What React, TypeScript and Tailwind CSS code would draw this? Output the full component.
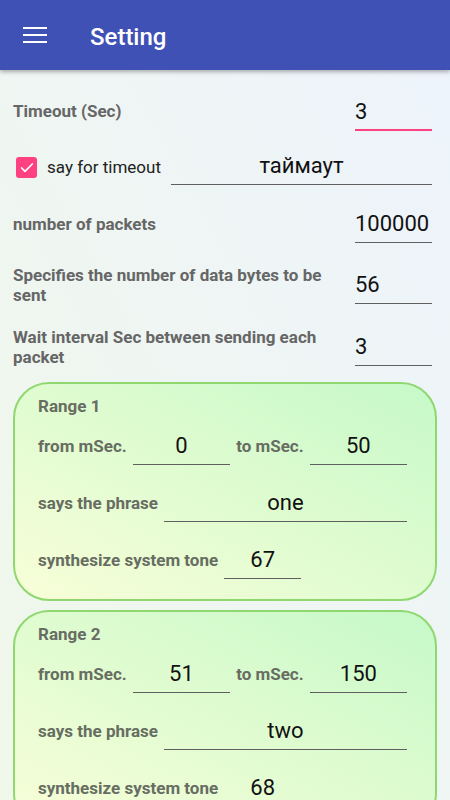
import { Check } from "lucide-react";

type FieldProps = { value: string; className?: string; active?: boolean };

function Field({ value, className = "", active = false }: FieldProps) {
  return (
    <div
      className={`flex h-[38px] shrink-0 items-center justify-center text-[22px] text-[#111] ${
        active ? "border-b-2 border-[#ff4081]" : "border-b border-[#5f5f5f]"
      } ${className}`}
    >
      {value}
    </div>
  );
}

function Row({ label, value, className = "" }: { label: string; value: string; className?: string }) {
  return (
    <div className={`mr-[5px] flex items-center gap-[10px] ${className}`}>
      <span className="flex-1 text-[17px] leading-5 font-bold text-[#666]">{label}</span>
      <Field value={value} className="w-[77px] !justify-start" />
    </div>
  );
}

function RangeCard({ n, from, to, phrase, tone, className = "" }: { n: number; from: string; to: string; phrase: string; tone: string; className?: string }) {
  const label = "text-[17px] leading-5 font-bold text-[#676d62] whitespace-nowrap";
  return (
    <div className={`rounded-[36px] border-2 border-[#8fd870] bg-linear-to-tr from-[#f8fed8] to-[#c6f9c9] pt-[12px] pr-[28px] pb-[20px] pl-[23px] ${className}`}>
      <div className={label}>Range {n}</div>
      <div className="mt-[11px] flex items-center gap-[6px]">
        <span className={label}>from mSec.</span>
        <Field value={from} className="flex-1" />
        <span className={label}>to mSec.</span>
        <Field value={to} className="flex-1" />
      </div>
      <div className="mt-[19px] flex items-center gap-[6px]">
        <span className={label}>says the phrase</span>
        <Field value={phrase} className="flex-1" />
      </div>
      <div className="mt-[19px] flex items-center gap-[6px]">
        <span className={label}>synthesize system tone</span>
        <Field value={tone} className="w-[77px]" />
      </div>
    </div>
  );
}

export default function App() {
  return (
    <div className="relative h-[800px] w-[450px] overflow-hidden bg-linear-to-tr from-[#f0f8ea] to-[#edf3fc] font-['Roboto',sans-serif]">
      <header className="relative z-10 flex h-[70px] items-center bg-[#3f51b5] shadow-[0_2px_4px_rgba(0,0,0,0.3)]">
        <svg width="24" height="18" viewBox="0 0 24 18" className="ml-[23px]">
          <rect x="0" y="1" width="24" height="2" fill="#fff" />
          <rect x="0" y="8" width="24" height="2" fill="#fff" />
          <rect x="0" y="15" width="24" height="2" fill="#fff" />
        </svg>
        <h1 className="mt-[3px] ml-[43px] text-[24px] font-medium text-white">Setting</h1>
      </header>

      <main className="px-[13px]">
        <div className="mt-[23px] mr-[5px] flex items-center gap-[10px]">
          <span className="flex-1 text-[17px] font-bold text-[#666]">Timeout (Sec)</span>
          <Field value="3" active className="w-[77px] !justify-start" />
        </div>

        <div className="mt-[16px] mr-[5px] flex items-center">
          <span className="mt-[3px] ml-[3px] flex h-[21px] w-[21px] items-center justify-center rounded-[3px] bg-[#ff4081]">
            <Check className="h-[16px] w-[16px] text-white" strokeWidth={2.5} />
          </span>
          <span className="mt-[3px] ml-[10px] text-[17px] text-[#222]">say for timeout</span>
          <Field value="таймаут" className="ml-[10px] flex-1" />
        </div>

        <Row label="number of packets" value="100000" className="mt-[20px]" />
        <Row label="Specifies the number of data bytes to be sent" value="56" className="mt-[22px]" />
        <Row label="Wait interval Sec between sending each packet" value="3" className="mt-[22px]" />

        <RangeCard n={1} from="0" to="50" phrase="one" tone="67" className="mt-[15px]" />
        <RangeCard n={2} from="51" to="150" phrase="two" tone="68" className="mt-[9px]" />
      </main>
    </div>
  );
}
